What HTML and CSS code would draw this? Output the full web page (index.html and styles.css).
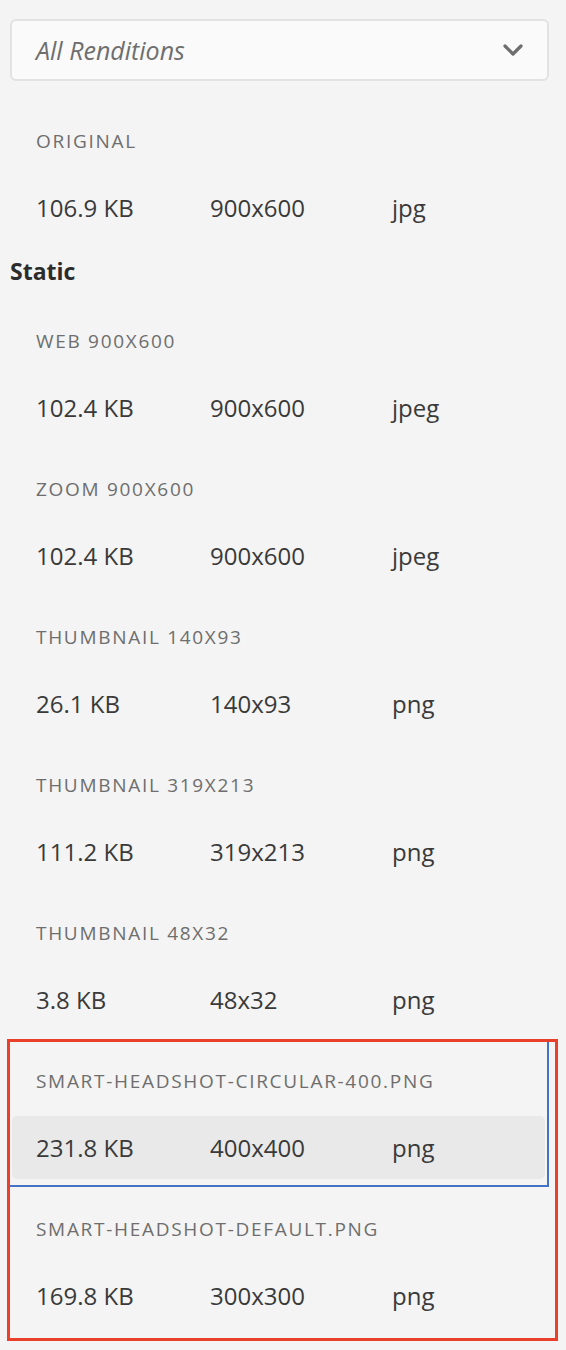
FILE: index.html
```html
<!DOCTYPE html>
<html>
<head>
<meta charset="utf-8">
<link rel="stylesheet" href="styles.css">
</head>
<body>
<div class="panel">
  <div class="select">
    <span class="select-text">All Renditions</span>
    <svg class="chev" width="20" height="12" viewBox="0 0 20 12"><path d="M2 2 L10 10 L18 2" fill="none" stroke="#6e6e6e" stroke-width="3.2" stroke-linecap="round" stroke-linejoin="round"/></svg>
  </div>

  <div class="list first">
    <div class="block">
      <div class="label">ORIGINAL</div>
      <div class="row"><span class="c1">106.9 KB</span><span class="c2">900x600</span><span class="c3">jpg</span></div>
    </div>
  </div>

  <div class="heading">Static</div>

  <div class="list">
    <div class="block">
      <div class="label">WEB 900X600</div>
      <div class="row"><span class="c1">102.4 KB</span><span class="c2">900x600</span><span class="c3">jpeg</span></div>
    </div>
    <div class="block">
      <div class="label">ZOOM 900X600</div>
      <div class="row"><span class="c1">102.4 KB</span><span class="c2">900x600</span><span class="c3">jpeg</span></div>
    </div>
    <div class="block">
      <div class="label">THUMBNAIL 140X93</div>
      <div class="row"><span class="c1">26.1 KB</span><span class="c2">140x93</span><span class="c3">png</span></div>
    </div>
    <div class="block">
      <div class="label">THUMBNAIL 319X213</div>
      <div class="row"><span class="c1">111.2 KB</span><span class="c2">319x213</span><span class="c3">png</span></div>
    </div>
    <div class="block">
      <div class="label">THUMBNAIL 48X32</div>
      <div class="row"><span class="c1">3.8 KB</span><span class="c2">48x32</span><span class="c3">png</span></div>
    </div>
    <div class="group">
      <div class="block">
        <div class="label">SMART-HEADSHOT-CIRCULAR-400.PNG</div>
        <div class="row hover"><span class="c1">231.8 KB</span><span class="c2">400x400</span><span class="c3">png</span></div>
      </div>
      <div class="block">
        <div class="label">SMART-HEADSHOT-DEFAULT.PNG</div>
        <div class="row"><span class="c1">169.8 KB</span><span class="c2">300x300</span><span class="c3">png</span></div>
      </div>
      <div class="mark-blue"></div>
      <div class="mark-red"></div>
    </div>
  </div>
</div>
</body>
</html>
```

FILE: styles.css
```css
html, body {
  margin: 0;
  padding: 0;
  background: #f4f4f4;
}
body {
  font-family: "Open Sans", "Noto Sans", sans-serif;
  width: 566px;
  height: 1350px;
  overflow: hidden;
}
.panel {
  padding: 19px 17px 0 10px;
}
.select {
  height: 58px;
  border: 2px solid #e2e2e2;
  border-radius: 6px;
  background: #fafafa;
  display: flex;
  align-items: center;
  justify-content: space-between;
  padding: 0 24px 0 24px;
}
.select-text {
  font-style: italic;
  font-size: 25px;
  color: #6e6e6e;
}
.chev {
  display: block;
}
.list {
  display: flex;
  flex-direction: column;
}
.list.first {
  margin-top: 10px;
}
.block {
  display: flex;
  flex-direction: column;
}
.label {
  padding: 38px 0 23px 26px;
  height: 24px;
  line-height: 24px;
  font-size: 19px;
  letter-spacing: 1.7px;
  color: #6e6e6e;
  white-space: nowrap;
}
.row {
  height: 63px;
  margin: 0 4px 0 2px;
  padding-left: 24px;
  display: flex;
  align-items: center;
  font-size: 24px;
  color: #3a3a3a;
  border-radius: 5px;
}
.row.hover {
  background: #e9e9e9;
}
.c1 { width: 174px; }
.c2 { width: 182px; }
.c3 { flex: 1; }
.heading {
  padding: 20px 0 8px 0;
  height: 24px;
  line-height: 24px;
  font-size: 23px;
  font-weight: 700;
  color: #2c2c2c;
}
.group {
  position: relative;
}
.mark-blue {
  position: absolute;
  left: 0;
  top: 11px;
  width: 539px;
  height: 145px;
  border-right: 2px solid #4472c4;
  border-bottom: 2px solid #4472c4;
  box-sizing: border-box;
  pointer-events: none;
}
.mark-red {
  position: absolute;
  left: -3px;
  top: 8px;
  width: 551px;
  height: 302px;
  border: 3px solid #e8402a;
  box-sizing: border-box;
  pointer-events: none;
}
```
